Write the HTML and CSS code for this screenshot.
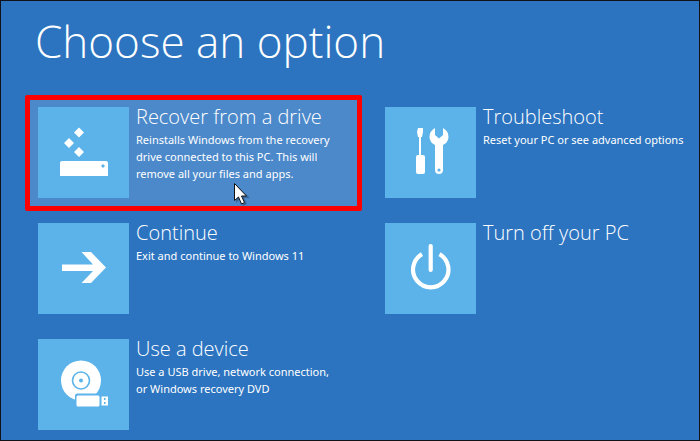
FILE: index.html
```html
<!DOCTYPE html>
<html lang="en">
<head>
<meta charset="utf-8">
<meta name="viewport" content="width=device-width, initial-scale=1">
<title>Choose an option</title>
<link rel="stylesheet" href="styles.css">
</head>
<body>
<main class="screen">
  <h1 class="heading">Choose an option</h1>
  <div class="options">
    <button class="option selected" type="button">
      <span class="tile">
        <svg viewBox="0 0 91 91" aria-hidden="true">
          <path fill="#fff" d="M41 20.500l5 5-5 5-5-5zM31 31l5 5-5 5-5-5zM41 40l5 5-5 5-5-5zM22 69V56q0-2 2-2h44q2 0 2 2v13z"/>
          <path fill="#5bb3ea" d="M65 57l2 2-2 2-2-2z"/>
        </svg>
      </span>
      <span class="text">
        <span class="title">Recover from a drive</span>
        <span class="detail">Reinstalls Windows from the recovery<br>drive connected to this PC. This will<br>remove all your files and apps.</span>
      </span>
      <svg class="pointer" viewBox="0 0 18 26" aria-hidden="true">
        <path class="pointer-shade" d="M3 3v18l4-4 3 7 4-2-3-6h6z"/>
        <path fill="#fff" stroke="#111" d="M1.500 1.500v17l4-3.500 3 7 3-1.500-3-6.500h5z"/>
      </svg>
    </button>
    <button class="option" type="button">
      <span class="tile">
        <svg viewBox="0 0 91 91" aria-hidden="true">
          <path fill="#fff" d="M33 21h5v4l-1 5h-1v18h2q2 0 2 2v15q0 2-2 2h-5q-2 0-2-2V50q0-2 2-2h1V30h-1l-1-5z"/>
          <path fill="#fff" d="M50 21v7l4 3.500 4-3.500v-7q5.500 3 5.500 9 0 5-5.500 8v25q0 4-4 4t-4-4V38q-5.500-3-5.500-8 0-6 5.500-9z"/>
          <circle cx="54" cy="63" r="1.600" fill="#5bb3ea"/>
        </svg>
      </span>
      <span class="text">
        <span class="title">Troubleshoot</span>
        <span class="detail">Reset your PC or see advanced options</span>
      </span>
    </button>
    <button class="option" type="button">
      <span class="tile">
        <svg viewBox="0 0 91 91" aria-hidden="true">
          <path fill="#fff" d="M24 41.500h31L43.500 29H53l15 15.500L53 60h-9.500L55 48H24z"/>
        </svg>
      </span>
      <span class="text">
        <span class="title">Continue</span>
        <span class="detail">Exit and continue to Windows 11</span>
      </span>
    </button>
    <button class="option" type="button">
      <span class="tile">
        <svg viewBox="0 0 91 91" aria-hidden="true">
          <path fill="none" stroke="#fff" stroke-width="4.200" d="M37 31.200A17.700 17.700 0 1 0 54.500 31.200"/>
          <path fill="none" stroke="#fff" stroke-width="4.200" stroke-linecap="round" d="M45.700 23v24"/>
        </svg>
      </span>
      <span class="text">
        <span class="title">Turn off your PC</span>
      </span>
    </button>
    <button class="option" type="button">
      <span class="tile">
        <svg viewBox="0 0 91 91" aria-hidden="true">
          <circle cx="43" cy="41.500" r="20" fill="#fff"/>
          <circle cx="43" cy="41.500" r="8.500" fill="none" stroke="#5bb3ea" stroke-width="1.600"/>
          <circle cx="43" cy="41.500" r="2" fill="#5bb3ea"/>
          <path fill="#5bb3ea" d="M37 69V57q0-2.500 2.500-2.500H71V69z"/>
          <rect x="38.500" y="56.500" width="23" height="11" rx="1.500" fill="#fff"/>
          <path fill="#fff" d="M63.500 57.500H70v9h-6.500z"/>
          <path fill="#5bb3ea" d="M66 59h1.500v2H66zM66 63h1.500v2H66z"/>
        </svg>
      </span>
      <span class="text">
        <span class="title">Use a device</span>
        <span class="detail">Use a USB drive, network connection,<br>or Windows recovery DVD</span>
      </span>
    </button>
  </div>
</main>
</body>
</html>
```
FILE: styles.css
```css
* {
  box-sizing: border-box;
}

body {
  margin: 0;
  background: #2c74c0;
  color: #fff;
  font-family: "Open Sans", "Noto Sans", sans-serif;
}

.screen {
  min-height: 100vh;
  padding: 8px 0 0 24px;
  overflow: hidden;
  border: 1px solid #111318;
}

.heading {
  margin: 0 0 22px 10px;
  font-size: 44px;
  font-weight: 300;
  line-height: 64px;
}

.options {
  display: grid;
  grid-template-columns: 337fr 327fr;
  column-gap: 10px;
  margin-bottom: -4px;
}

.option {
  position: relative;
  display: flex;
  align-items: flex-start;
  gap: 7px;
  padding: 7px 0 8px 8px;
  border: 5px solid transparent;
  border-right-width: 0;
  background: none;
  color: inherit;
  font: inherit;
  text-align: left;
}

.selected {
  border: 5px solid #fe0000;
  border-radius: 2px;
  background: #4c89ca;
}

.tile {
  flex: none;
  width: 91px;
  height: 91px;
  background: #5bb3ea;
}

.tile svg {
  display: block;
}

.text {
  white-space: nowrap;
}

.title {
  display: block;
  margin-top: -4px;
  font-size: 20px;
  font-weight: 300;
  line-height: 28px;
}

.detail {
  display: block;
  font-family: "Noto Sans", "Open Sans", sans-serif;
  font-size: 11px;
  line-height: 17px;
}

.pointer {
  position: absolute;
  left: 203px;
  top: 82px;
  width: 18px;
  height: 26px;
}

.pointer-shade {
  fill: #000;
  opacity: 0.25;
}
```
